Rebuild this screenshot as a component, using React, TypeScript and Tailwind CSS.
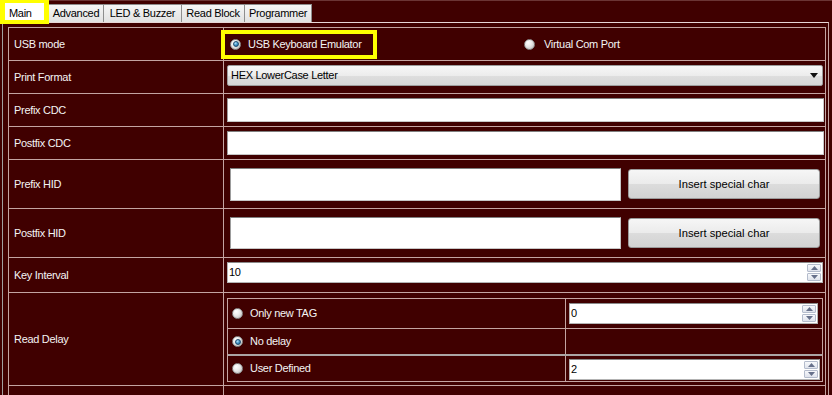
import React from "react";

const LINE = "border-[#c4a4a2]";

function Radio({ checked }: { checked?: boolean }) {
  return (
    <span className="flex h-[11px] w-[11px] shrink-0 items-center justify-center rounded-full border border-[#8d8d8d] bg-[radial-gradient(circle_at_35%_30%,#ffffff_0%,#e8e8e8_45%,#b5b5b5_100%)]">
      {checked && (
        <span className="h-[6px] w-[6px] rounded-full border border-[#1d4b6e] bg-[radial-gradient(circle_at_35%_30%,#b4e4fb_0%,#3b8fc4_55%,#1b5c8c_100%)]" />
      )}
    </span>
  );
}

function SpinArrows() {
  return (
    <div className="flex h-full w-[15px] shrink-0 flex-col gap-[1px] py-[1px] pr-[1px]">
      <div className="flex flex-1 items-center justify-center rounded-[1px] border border-[#b4bccc] bg-[linear-gradient(#f7f8fb,#dfe3ec)]">
        <svg width="7" height="4" viewBox="0 0 7 4">
          <path d="M3.5 0 L7 4 L0 4 Z" fill="#66708a" />
        </svg>
      </div>
      <div className="flex flex-1 items-center justify-center rounded-[1px] border border-[#b4bccc] bg-[linear-gradient(#f7f8fb,#dfe3ec)]">
        <svg width="7" height="4" viewBox="0 0 7 4">
          <path d="M0 0 L7 0 L3.5 4 Z" fill="#66708a" />
        </svg>
      </div>
    </div>
  );
}

function Spin({ value }: { value: string }) {
  return (
    <div className="flex h-[21px] w-full items-center border border-[#b3b3b3] border-t-[#8a8a8a] bg-white text-black">
      <span className="flex-1 pl-[1px]">{value}</span>
      <SpinArrows />
    </div>
  );
}

function TextInput({ h }: { h: string }) {
  return <div className={`${h} w-full border border-[#c6c6c6] border-l-[#9c9c9c] border-t-[#7f7f7f] bg-white`} />;
}

function Button() {
  return (
    <div className="mt-[1px] flex h-[30px] w-[192px] shrink-0 items-center justify-center rounded-[3px] border border-[#9a9a9a] bg-[linear-gradient(#f6f6f6_0%,#ebebeb_50%,#dcdcdc_51%,#d2d2d2_100%)] text-[11.2px] tracking-normal text-black">
      Insert special char
    </div>
  );
}

function Label({ text }: { text: string }) {
  return (
    <div className={`flex w-[215px] shrink-0 items-center border-r ${LINE} pl-[5px] text-[#f4f4f4]`}>
      {text}
    </div>
  );
}

export default function App() {
  return (
    <div className="relative h-[395px] w-[832px] overflow-hidden bg-[#400000] font-['Liberation_Sans',Arial,sans-serif] text-[11px] tracking-[-0.3px]">
      {/* tab bar */}
      <div className="flex h-[22px] items-end border-t border-[#6b3434] pl-[2px]">
        <div className="flex h-[21px] w-[47px] items-start border border-b-0 border-[#9a9a9a] bg-white pl-[6px] pt-[3px] text-black">
          Main
        </div>
        <div className="-ml-px flex h-[18px] w-[56px] items-center justify-center border border-b-0 border-[#8e8e8e] bg-[linear-gradient(#f6f6f6,#e2e2e2)] text-black">
          Advanced
        </div>
        <div className="-ml-px flex h-[18px] w-[79px] items-center justify-center border border-b-0 border-[#8e8e8e] bg-[linear-gradient(#f6f6f6,#e2e2e2)] text-black">
          LED &amp; Buzzer
        </div>
        <div className="-ml-px flex h-[18px] w-[64px] items-center justify-center border border-b-0 border-[#8e8e8e] bg-[linear-gradient(#f6f6f6,#e2e2e2)] text-black">
          Read Block
        </div>
        <div className="-ml-px flex h-[18px] w-[68px] items-center justify-center border border-b-0 border-[#8e8e8e] bg-[linear-gradient(#f6f6f6,#e2e2e2)] text-black">
          Programmer
        </div>
      </div>

      {/* panel */}
      <div className="ml-[2px] h-[400px] w-[827px] border-l border-r border-t border-l-[#a0a0a0] border-r-[#c4a4a2] border-t-[#e8d6d6] pl-[5px] pr-[2px] pt-[4px]">
        <div className={`w-[818px] border-l border-r border-t ${LINE}`}>
          {/* USB mode */}
          <div className={`flex h-[33px] border-b ${LINE}`}>
            <Label text="USB mode" />
            <div className="flex flex-1 items-center text-[#f4f4f4]">
              <div className="flex w-[300px] items-center gap-[7px] pl-[6px]">
                <Radio checked />
                <span>USB Keyboard Emulator</span>
              </div>
              <div className="flex items-center gap-[9px]">
                <Radio />
                <span>Virtual Com Port</span>
              </div>
            </div>
          </div>

          {/* Print Format */}
          <div className={`flex h-[33px] border-b ${LINE}`}>
            <Label text="Print Format" />
            <div className="flex-1 pl-[3px] pr-[2px] pt-[4px]">
              <div className="flex h-[21px] w-full items-center justify-between rounded-[2px] border border-[#9c9c9c] bg-[linear-gradient(#f7f7f7_0%,#ececec_50%,#dedede_51%,#d6d6d6_100%)] pl-[3px] pr-[4px] text-black">
                <span>HEX LowerCase Letter</span>
                <svg width="8" height="5" viewBox="0 0 8 5">
                  <path d="M0 0 L8 0 L4 5 Z" fill="#111" />
                </svg>
              </div>
            </div>
          </div>

          {/* Prefix CDC */}
          <div className={`flex h-[33px] border-b ${LINE}`}>
            <Label text="Prefix CDC" />
            <div className="flex-1 pl-[3px] pr-[1px] pt-[4px]">
              <TextInput h="h-[24px]" />
            </div>
          </div>

          {/* Postfix CDC */}
          <div className={`flex h-[33px] border-b ${LINE}`}>
            <Label text="Postfix CDC" />
            <div className="flex-1 pl-[3px] pr-[1px] pt-[4px]">
              <TextInput h="h-[24px]" />
            </div>
          </div>

          {/* Prefix HID */}
          <div className={`flex h-[49px] border-b ${LINE}`}>
            <Label text="Prefix HID" />
            <div className="flex flex-1 items-start gap-[7px] pl-[6px] pr-[5px] pt-[8px]">
              <TextInput h="h-[33px]" />
              <Button />
            </div>
          </div>

          {/* Postfix HID */}
          <div className={`flex h-[49px] border-b ${LINE}`}>
            <Label text="Postfix HID" />
            <div className="flex flex-1 items-start gap-[7px] pl-[6px] pr-[5px] pt-[8px]">
              <TextInput h="h-[32px]" />
              <Button />
            </div>
          </div>

          {/* Key Interval */}
          <div className={`flex h-[35px] border-b ${LINE}`}>
            <Label text="Key Interval" />
            <div className="flex-1 pl-[3px] pr-[2px] pt-[4px]">
              <Spin value="10" />
            </div>
          </div>

          {/* Read Delay */}
          <div className={`flex h-[93px] border-b ${LINE}`}>
            <Label text="Read Delay" />
            <div className="flex-1 pl-[3px] pr-[2px] pt-[5px]">
              <div className={`flex h-[84px] flex-col border ${LINE} text-[#f4f4f4]`}>
                <div className={`flex h-[30px] border-b ${LINE}`}>
                  <div className={`flex w-[338px] items-center gap-[7px] border-r ${LINE} pl-[4px]`}>
                    <Radio />
                    <span>Only new TAG</span>
                  </div>
                  <div className="flex-1 pl-[3px] pr-[4px] pt-[4px]">
                    <Spin value="0" />
                  </div>
                </div>
                <div className="flex h-[27px] border-b-2 border-[#aba5a5]">
                  <div className={`flex w-[338px] items-center gap-[7px] border-r ${LINE} pl-[4px]`}>
                    <Radio checked />
                    <span>No delay</span>
                  </div>
                  <div className="flex-1" />
                </div>
                <div className="flex flex-1">
                  <div className={`flex w-[338px] items-center gap-[7px] border-r ${LINE} pl-[4px]`}>
                    <Radio />
                    <span>User Defined</span>
                  </div>
                  <div className="flex-1 pl-[3px] pr-[2px] pt-[3px]">
                    <Spin value="2" />
                  </div>
                </div>
              </div>
            </div>
          </div>

          {/* next row (cut) */}
          <div className={`flex h-[40px] border-b ${LINE}`}>
            <Label text="" />
            <div className="flex-1" />
          </div>
        </div>
      </div>

      {/* yellow annotation highlights */}
      <div className="pointer-events-none absolute left-0 top-0 h-[24px] w-[49px] border-b-[4px] border-l-[5px] border-r-[5px] border-t-[3px] border-[#ffff00]" />
      <div className="pointer-events-none absolute left-[221px] top-[30px] h-[29px] w-[156px] border-[4px] border-[#ffff00]" />
    </div>
  );
}
